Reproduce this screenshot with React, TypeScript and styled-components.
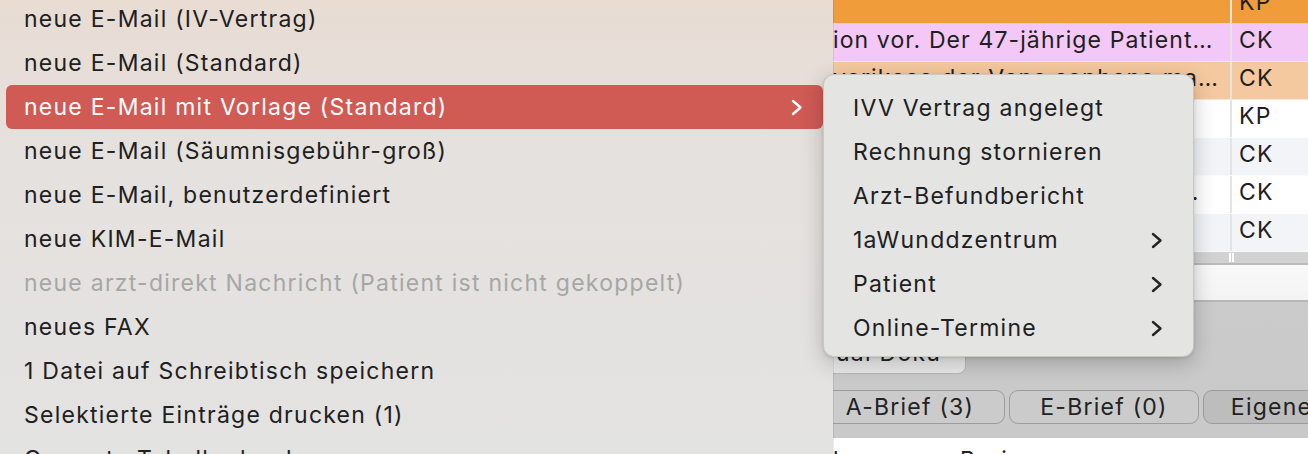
import React from "react";
import styled, { createGlobalStyle, css } from "styled-components";

const Global = createGlobalStyle`
  html, body { margin: 0; padding: 0; background: #cdcdcd; }
  body { font-family: Inter, "Liberation Sans", "Noto Sans", sans-serif; -webkit-font-smoothing: antialiased; }
  * { box-sizing: border-box; }
`;

const Screen = styled.div`
  position: relative;
  display: flex;
  width: 1308px;
  height: 454px;
  overflow: hidden;
  font-family: Inter, "Liberation Sans", sans-serif;
  letter-spacing: 1.25px;
`;

/* ---------- main context menu ---------- */
const MainMenu = styled.div`
  flex: none;
  width: 833px;
  background: linear-gradient(to bottom, #e8dcd3 0px, #e5e1de 160px, #e3e3e2 100%);
  box-shadow: 1px 0 0 rgba(0, 0, 0, 0.08);
  z-index: 1;
`;

const MenuList = styled.div`
  display: flex;
  flex-direction: column;
  margin-top: -3px;
  padding: 0 10px 0 6px;
`;

const MenuItem = styled.div<{ $active?: boolean; $disabled?: boolean }>`
  flex: none;
  height: 44px;
  display: flex;
  align-items: center;
  justify-content: space-between;
  padding: 0 20px 0 18px;
  border-radius: 6px;
  font-size: 23px;
  color: #202020;
  white-space: nowrap;
  ${(p) =>
    p.$disabled &&
    css`
      color: #a6a6a6;
    `}
  ${(p) =>
    p.$active &&
    css`
      background: #d05a54;
      color: #ffffff;
    `}
`;

/* ---------- submenu ---------- */
const SubMenu = styled.div`
  position: absolute;
  left: 823px;
  top: 74px;
  width: 371px;
  height: 283px;
  padding: 11px 0 8px;
  display: flex;
  flex-direction: column;
  background: #e4e4e2;
  border: 1px solid rgba(0, 0, 0, 0.12);
  border-radius: 11px;
  box-shadow: 0 6px 22px rgba(0, 0, 0, 0.22), 0 1px 3px rgba(0, 0, 0, 0.12);
  z-index: 3;
`;

const SubItem = styled.div`
  flex: none;
  height: 44px;
  display: flex;
  align-items: center;
  justify-content: space-between;
  padding: 0 30px 0 29px;
  font-size: 23px;
  color: #202020;
  white-space: nowrap;
`;

const ChevronSvg = styled.svg<{ $light?: boolean }>`
  flex: none;
  width: 12px;
  height: 17px;
  color: ${(p) => (p.$light ? "#ffffff" : "#242424")};
`;

const Chevron = ({ light }: { light?: boolean }) => (
  <ChevronSvg $light={light} viewBox="0 0 12 17" fill="none">
    <polyline
      points="2,2 9.5,8.5 2,15"
      stroke="currentColor"
      strokeWidth="2.4"
      strokeLinecap="round"
      strokeLinejoin="round"
    />
  </ChevronSvg>
);

/* ---------- background window ---------- */
const Window = styled.div`
  flex: 1;
  min-width: 0;
  display: flex;
  flex-direction: column;
  background: linear-gradient(to bottom, #cfcfcf, #c9c9c9);
`;

const Table = styled.div`
  flex: none;
  display: flex;
  flex-direction: column;
  margin-top: -14px;
  background: #fff;
`;

const tones: Record<string, string> = {
  orange: "#f09c3a",
  pink: "#f4c8f6",
  peach: "#f5c99f",
  white: "#ffffff",
  grey: "#f3f4f8",
};

const Row = styled.div<{ $tone: string }>`
  flex: none;
  display: grid;
  grid-template-columns: 397px 2px 1fr;
  height: 38px;
  border-bottom: 1px solid rgba(255, 255, 255, 0.55);
  background: ${(p) => tones[p.$tone]};
  font-size: 23px;
  color: #202020;
  line-height: 32px;
`;

const TextCell = styled.div<{ $ellipsis?: boolean }>`
  overflow: hidden;
  white-space: nowrap;
  letter-spacing: 1.1px;
  ${(p) =>
    p.$ellipsis &&
    css`
      text-overflow: ellipsis;
      padding-right: 24px;
    `}
`;

const ColLine = styled.div`
  background: #e4e4e4;
`;

const CodeCell = styled.div`
  padding-left: 7px;
  white-space: nowrap;
`;

const ScrollBar = styled.div`
  flex: none;
  position: relative;
  height: 13px;
  background: #d2d2d2;
  border-bottom: 2px solid #bababa;
`;

const Grip = styled.div`
  position: absolute;
  left: 396px;
  top: 1px;
  width: 5px;
  height: 9px;
  border-left: 2px solid #fff;
  border-right: 2px solid #fff;
`;

const InputStrip = styled.div`
  flex: none;
  height: 37px;
  background: linear-gradient(to bottom, #f9f9f9, #f4f4f4);
  border-bottom: 2px solid #b8b8b8;
`;

const Toolbar = styled.div`
  flex: none;
  height: 72px;
  padding-top: 35px;
  display: flex;
`;

const DocButton = styled.div`
  width: 133px;
  height: 37px;
  background: linear-gradient(to bottom, #f1f1f1, #e9e9e9);
  border: 1px solid #b9b9b9;
  border-left: none;
  border-radius: 0 0 8px 0;
  font-size: 23px;
  line-height: 30px;
  color: #222;
  padding-left: 3px;
  white-space: nowrap;
  overflow: hidden;
`;

const Tabs = styled.div`
  flex: none;
  display: flex;
  gap: 4px;
  margin-top: 16px;
  margin-left: -18px;
  height: 34px;
`;

const Tab = styled.div<{ $selected?: boolean }>`
  flex: none;
  width: 190px;
  height: 34px;
  display: flex;
  align-items: center;
  justify-content: center;
  border: 1.5px solid #9c9c9c;
  border-radius: 9px;
  background: ${(p) => (p.$selected ? "#bdbdbd" : "#cbcbcb")};
  font-size: 23px;
  color: #222;
  white-space: nowrap;
`;

const Content = styled.div`
  flex: 1;
  margin-top: 14px;
  background: #fff;
  display: flex;
  font-size: 23px;
  color: #222;
  padding-top: 8px;
  white-space: nowrap;
`;

const ContentCell = styled.div<{ $w: number }>`
  width: ${(p) => p.$w}px;
  flex: none;
  overflow: hidden;
`;

const menuItems: { label: string; active?: boolean; disabled?: boolean; sub?: boolean }[] = [
  { label: "neue E-Mail (IV-Vertrag)" },
  { label: "neue E-Mail (Standard)" },
  { label: "neue E-Mail mit Vorlage (Standard)", active: true, sub: true },
  { label: "neue E-Mail (Säumnisgebühr-groß)" },
  { label: "neue E-Mail, benutzerdefiniert" },
  { label: "neue KIM-E-Mail" },
  { label: "neue arzt-direkt Nachricht (Patient ist nicht gekoppelt)", disabled: true },
  { label: "neues FAX" },
  { label: "1 Datei auf Schreibtisch speichern" },
  { label: "Selektierte Einträge drucken (1)" },
  { label: "Gesamte Tabelle drucken" },
];

const subItems: { label: string; sub?: boolean }[] = [
  { label: "IVV Vertrag angelegt" },
  { label: "Rechnung stornieren" },
  { label: "Arzt-Befundbericht" },
  { label: "1aWunddzentrum", sub: true },
  { label: "Patient", sub: true },
  { label: "Online-Termine", sub: true },
];

const rows: { tone: string; text: string; code: string; ellipsis?: boolean }[] = [
  { tone: "orange", text: "", code: "KP" },
  { tone: "pink", text: "ion vor. Der 47-jährige Patient…", code: "CK" },
  { tone: "peach", text: "varikose der Vena saphena ma…", code: "CK" },
  { tone: "white", text: "", code: "KP" },
  { tone: "grey", text: "", code: "CK" },
  { tone: "white", text: "Kontrolle nach Kompressionstherapie, Wunde reizlos", code: "CK", ellipsis: true },
  { tone: "grey", text: "", code: "CK" },
];

export default function App() {
  return (
    <Screen>
      <Global />
      <MainMenu>
        <MenuList>
          {menuItems.map((m) => (
            <MenuItem key={m.label} $active={m.active} $disabled={m.disabled}>
              <span>{m.label}</span>
              {m.sub && <Chevron light={m.active} />}
            </MenuItem>
          ))}
        </MenuList>
      </MainMenu>

      <Window>
        <Table>
          {rows.map((r, i) => (
            <Row key={i} $tone={r.tone}>
              <TextCell $ellipsis={r.ellipsis}>{r.text}</TextCell>
              <ColLine />
              <CodeCell>{r.code}</CodeCell>
            </Row>
          ))}
        </Table>
        <ScrollBar>
          <Grip />
        </ScrollBar>
        <InputStrip />
        <Toolbar>
          <DocButton>ual Doku</DocButton>
        </Toolbar>
        <Tabs>
          <Tab>A-Brief (3)</Tab>
          <Tab>E-Brief (0)</Tab>
          <Tab $selected>Eigene (12)</Tab>
        </Tabs>
        <Content>
          <ContentCell $w={127}>l</ContentCell>
          <ContentCell $w={300}>Beri</ContentCell>
        </Content>
      </Window>

      <SubMenu>
        {subItems.map((s) => (
          <SubItem key={s.label}>
            <span>{s.label}</span>
            {s.sub && <Chevron />}
          </SubItem>
        ))}
      </SubMenu>
    </Screen>
  );
}
